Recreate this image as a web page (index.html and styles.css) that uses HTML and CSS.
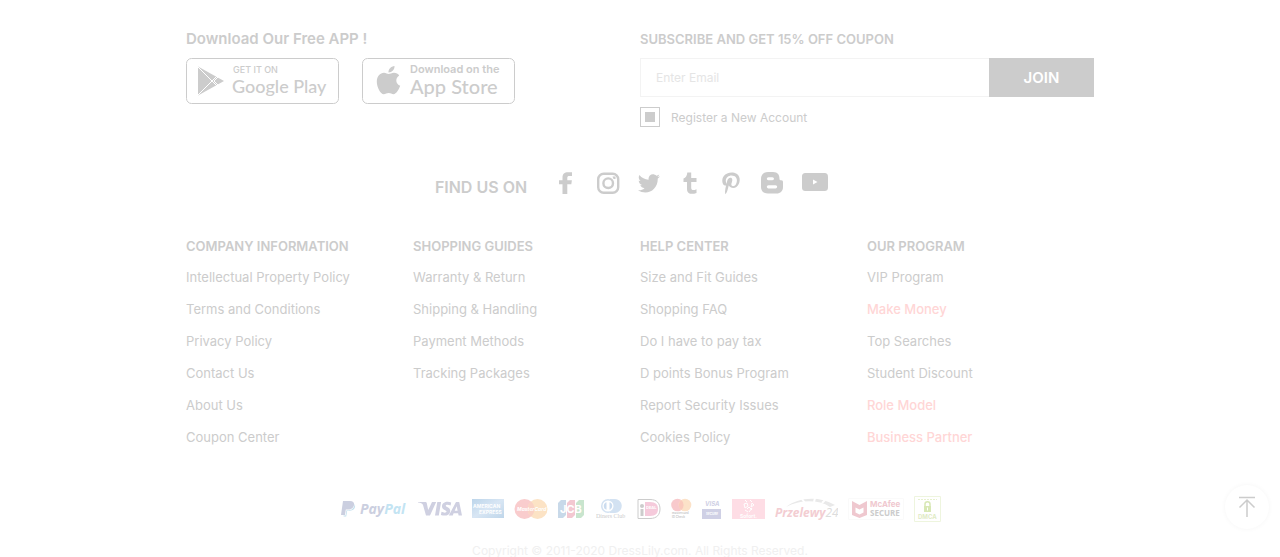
FILE: index.html
```html
<!DOCTYPE html>
<html lang="en">
<head>
<meta charset="utf-8">
<meta name="viewport" content="width=device-width, initial-scale=1">
<title>DressLily</title>
<link rel="stylesheet" href="styles.css">
</head>
<body>
<footer class="footer">
  <div class="top">
    <section class="apps">
      <h2 class="apps-title">Download Our Free APP !</h2>
      <div class="badges">
        <a class="badge" href="#" aria-label="Get it on Google Play">
          <svg width="153" height="46" viewBox="0 0 153 46">
            <rect x=".5" y=".5" width="152" height="45" rx="5" fill="none" stroke="#ccc"/>
            <path d="M12 8.500L38 23 12 37.500z" fill="#ccc"/>
            <path d="M12 9L32 29M12 37L32 17M33 18l-5 5 5 5" fill="none" stroke="#fff"/>
            <text class="google-small" x="47" y="15">GET IT ON</text>
            <text class="google-big" x="46" y="35">Google Play</text>
          </svg>
        </a>
        <a class="badge" href="#" aria-label="Download on the App Store">
          <svg width="153" height="46" viewBox="0 0 153 46">
            <rect x=".5" y=".5" width="152" height="45" rx="5" fill="none" stroke="#ccc"/>
            <path d="M32.500 8c.3 3.500-2.500 6.500-6 6.500C26.200 11.300 29 8.300 32.500 8zM26.500 16c1.600 0 3.200-1.300 5.500-1.300 2.200 0 4.100 1 5.200 2.800-4.300 2.700-3.700 8.500 1 10.300-1.200 3.500-4 8.400-6.700 8.400-1.800 0-2.700-1.100-4.800-1.100s-3.200 1.100-4.900 1.100c-3.300 0-7-7.200-7-12.500 0-5.500 3.300-9 7.200-9 2 0 3.400 1.300 4.500 1.300z" fill="#ccc"/>
            <text class="apple-small" x="48" y="15">Download on the</text>
            <text class="apple-big" x="48" y="36">App Store</text>
          </svg>
        </a>
      </div>
    </section>
    <form class="subscribe">
      <label class="section-title" for="email">SUBSCRIBE AND GET 15% OFF COUPON</label>
      <div class="email-row">
        <input class="email" id="email" type="email" placeholder="Enter Email">
        <button class="join" type="button">JOIN</button>
      </div>
      <div class="register">
        <input class="check" id="register" type="checkbox" checked>
        <label for="register">Register a New Account</label>
      </div>
    </form>
  </div>

  <section class="social">
    <h2 class="social-title">FIND US ON</h2>
    <div class="social-links">
      <a href="#" aria-label="Facebook"><svg width="24" height="24" viewBox="0 0 24 24"><path d="M7.500 23V13.200H4V9.300h3.500V6.500C7.500 3 9.500 1.300 13 1.300h4v3.800h-2.700c-1.400 0-2 .5-2 1.800v2.400h4.600l-.6 3.900h-4V23z"/></svg></a>
      <a href="#" aria-label="Instagram"><svg width="24" height="24" viewBox="0 0 24 24"><g fill="none" stroke="#ccc" stroke-width="2.400"><rect x="2.200" y="2.700" width="20" height="19" rx="5.500"/><circle cx="12.200" cy="12.200" r="4.800"/></g><path d="M16.500 5.500h3v2.500h-2z"/></svg></a>
      <a href="#" aria-label="Twitter"><svg width="24" height="24" viewBox="0 0 24 24"><path d="M23 5.200c-.8.500-1.700.7-2.600.9.900-.6 1.600-1.500 1.900-2.500-.9.500-1.800.9-2.900 1.100C16.200 1.400 10.800 3.600 11.600 8.800 7.900 8.600 4.600 6.900 2.400 4.100c-1.300 2.200-.5 4.700 1.300 6-.7 0-1.400-.2-2-.6 0 2.200 1.500 4 3.600 4.500-.7.200-1.300.2-2 .1.600 1.800 2.200 3 4.200 3.100C5.600 18.800 3.300 19.500 1 19.200c8.500 5.500 19.800.7 19.800-11.700.9-.6 1.600-1.400 2.200-2.300z"/></svg></a>
      <a href="#" aria-label="Tumblr"><svg width="24" height="24" viewBox="0 0 24 24"><path d="M9.300 1.500h3.900v5.600h5.300V11h-5.300v5.700c0 2.500 2 3 5.300 1.500v3.700c-5.100 2-9.500.9-9.500-4V11H5.500V7.500c2.300-.7 3.500-2.800 3.800-6z"/></svg></a>
      <a href="#" aria-label="Pinterest"><svg width="24" height="24" viewBox="0 0 24 24"><path d="M9.700 14.500C8.700 19 8 22 6.200 23.200c-.6-3.500.5-7.200 2-13.100.3-2.900 3.900-4.600 5-2 .7 1.800-1.300 4.600-.8 6 .6 1.700 3.300 1.200 4.400-.6 1.800-3 1.500-7.200-1.700-8.500C11.300 3.400 6.700 5.700 6.800 9.800c0 1.600.8 2.300.6 3.500-.2 1.300-.8 1.700-1.600 1.300-3-1.500-3.300-6.600-1-9.600C7.400 1.600 13.500.2 17.600 2.800c4.800 3 3.500 10.300.1 12.900-2.500 2-6.300 1.600-8-1.200z"/></svg></a>
      <a href="#" aria-label="Blogger"><svg width="24" height="24" viewBox="0 0 24 24"><path fill-rule="evenodd" d="M8 1h5c5 0 6.500 3 6.500 7 0 1 .5 1.300 1.700 1.300 1.500 0 1.800.7 1.800 2.200V16c0 4-2.500 6.500-6.500 6.500H8c-4.500 0-7-2.500-7-6.500V8c0-4 2.500-7 7-7zm.5 5.200c-2.200 0-2.200 3 0 3h3.800c2.200 0 2.200-3 0-3zm0 8c-2.200 0-2.200 3.200 0 3.200h7c2.200 0 2.200-3.200 0-3.200z"/></svg></a>
      <a href="#" aria-label="YouTube"><svg width="28" height="24" viewBox="0 0 28 24"><path fill-rule="evenodd" d="M5 2h18c3 0 4 1 4 4v10c0 3-1 4-4 4H5c-3 0-4-1-4-4V6c0-3 1-4 4-4zm7 6.500v5l4.500-2.500z"/></svg></a>
    </div>
  </section>

  <nav class="columns" aria-label="Footer">
    <section>
      <h2 class="section-title">COMPANY INFORMATION</h2>
      <ul class="links">
        <li><a href="#">Intellectual Property Policy</a></li>
        <li><a href="#">Terms and Conditions</a></li>
        <li><a href="#">Privacy Policy</a></li>
        <li><a href="#">Contact Us</a></li>
        <li><a href="#">About Us</a></li>
        <li><a href="#">Coupon Center</a></li>
      </ul>
    </section>
    <section>
      <h2 class="section-title">SHOPPING GUIDES</h2>
      <ul class="links">
        <li><a href="#">Warranty &amp; Return</a></li>
        <li><a href="#">Shipping &amp; Handling</a></li>
        <li><a href="#">Payment Methods</a></li>
        <li><a href="#">Tracking Packages</a></li>
      </ul>
    </section>
    <section>
      <h2 class="section-title">HELP CENTER</h2>
      <ul class="links">
        <li><a href="#">Size and Fit Guides</a></li>
        <li><a href="#">Shopping FAQ</a></li>
        <li><a href="#">Do I have to pay tax</a></li>
        <li><a href="#">D points Bonus Program</a></li>
        <li><a href="#">Report Security Issues</a></li>
        <li><a href="#">Cookies Policy</a></li>
      </ul>
    </section>
    <section>
      <h2 class="section-title">OUR PROGRAM</h2>
      <ul class="links">
        <li><a href="#">VIP Program</a></li>
        <li><a class="hot" href="#">Make Money</a></li>
        <li><a href="#">Top Searches</a></li>
        <li><a href="#">Student Discount</a></li>
        <li><a class="hot" href="#">Role Model</a></li>
        <li><a class="hot" href="#">Business Partner</a></li>
      </ul>
    </section>
  </nav>

  <div class="payments">
    <svg width="67" height="26" viewBox="0 0 67 26" role="img" aria-label="PayPal">
      <path d="M2 5h7c3.500 0 4.500 2 4 4.200-.6 3-3 4.300-6 4.300H4.800L4 19H0z" fill="#cbcfe0"/>
      <path d="M13.800 8c1.200 4-1.300 6.700-5.300 6.700H6.200L5.200 20.500H2.700l-.3-1h2.200l.9-5.300H7.500c3.500 0 5.700-2.200 6.300-6.200z" fill="#c3e0ee"/>
      <text class="paypal" x="19" y="18" fill="#cbcfe0">Pay<tspan fill="#c3e4f3">Pal</tspan></text>
    </svg>
    <svg width="44" height="26" viewBox="0 0 44 26" role="img" aria-label="Visa">
      <g fill="#cfd0e1"><path d="M0 6h7.200c1 0 1.400.5 1.600 1.300l1.400 6.800L14 6h4.200l-6.200 13.500H8L5 9C4.500 7.500 2.500 6.800 0 6.500zM19.300 6h3.800l-2.300 13.500H17zM33.200 6.500l-.6 3c-2.400-1.100-4.800-1-4.800.2 0 1.300 4.500 1.500 4.400 5.200-.1 4.500-5.200 5.600-9.300 4l.6-3.100c2.500 1.200 5 1.100 5-.3s-4.500-1.500-4.500-5.100c0-4.300 5-5.500 9.200-3.900z"/><path fill-rule="evenodd" d="M38 6h3.200L44 19.500h-3.400l-.5-2.200h-4.500l-.8 2.200h-4zm.7 4.200l-2 4.500h2.900z"/></g>
    </svg>
    <svg width="32" height="26" viewBox="0 0 32 26" role="img" aria-label="American Express">
      <defs><linearGradient id="amex" x1="0" x2="1" y1="0" y2="1"><stop stop-color="#bcd5ea"/><stop offset=".5" stop-color="#d8e6f4"/><stop offset="1" stop-color="#bfd6ea"/></linearGradient></defs>
      <path d="M0 3h32v19H0z" fill="url(#amex)"/><text class="tiny" x="1" y="12" fill="#fff">AMERICAN</text><text class="tiny" x="7" y="18" fill="#fff">EXPRESS</text>
    </svg>
    <svg width="34" height="26" viewBox="0 0 34 26" role="img" aria-label="MasterCard">
      <circle cx="10.500" cy="13" r="10" fill="#f9cccd"/><circle cx="23.500" cy="13" r="10" fill="#fce3c5"/><path d="M17 5.400a10 10 0 0 1 0 15.200 10 10 0 0 1 0-15.200z" fill="#fad2c5"/><text class="master" x="3" y="15" fill="#fff">MasterCard</text>
    </svg>
    <svg width="28" height="26" viewBox="0 0 28 26" role="img" aria-label="JCB">
      <path d="M3 4h5v15l-3 3H0V7z" fill="#c8d9e9"/><path d="M12 4h5v15l-3 3H9V7z" fill="#f3c8d1"/><path d="M21 4h5v15l-3 3h-5V7z" fill="#c9e5ce"/><text class="jcb" x="2" y="17" fill="#fff">JCB</text>
    </svg>
    <svg width="31" height="26" viewBox="0 0 31 26" role="img" aria-label="Diners Club">
      <path d="M14 3h5c9 1 9 13 0 14h-5z" fill="#d3e2f2"/><circle cx="12" cy="10" r="7" fill="#d3e2f2"/><circle cx="12" cy="10" r="5.500" fill="#fff"/><path d="M10.500 6.200v7.600a4 4 0 0 1 0-7.600zm3 0v7.600a4 4 0 0 0 0-7.600z" fill="#cbdcef"/><text class="diners" x="0" y="22" fill="#ccc">Diners Club</text>
    </svg>
    <svg width="24" height="26" viewBox="0 0 24 26" role="img" aria-label="iDEAL">
      <path d="M1 3.500h12c7 0 10 4 10 9.500s-3 9.500-10 9.500H1z" fill="#fff" stroke="#ccc"/><path d="M8 6h5c6 0 8 3 8 7s-2 7-8 7H8z" fill="#f5cadb"/><circle cx="5" cy="10" r="2" fill="#ccc"/><path d="M3.500 13h3v7h-3z" fill="#ccc"/><text class="ideal" x="9" y="13" fill="#fff">DEAL</text>
    </svg>
    <svg width="21" height="26" viewBox="0 0 21 26" role="img" aria-label="mastercard">
      <circle cx="6.500" cy="9" r="6.300" fill="#f8c9cc"/><circle cx="14" cy="9" r="6.300" fill="#fce2c8"/><path d="M10.200 4a6.300 6.300 0 0 1 0 10 6.300 6.300 0 0 1 0-10z" fill="#facabd"/><text class="micro" x="1" y="18" fill="#ccc">mastercard</text><text class="micro" x="1" y="22" fill="#ccc">ID Check</text>
    </svg>
    <svg width="20" height="26" viewBox="0 0 20 26" role="img" aria-label="Verified by Visa">
      <text class="visa-small" x="3" y="10" fill="#cfd0e5">VISA</text><path d="M0 13h19v10H0z" fill="#cfd0e5"/><text class="micro" x="4" y="19" fill="#fff">SECURE</text>
    </svg>
    <svg width="33" height="26" viewBox="0 0 33 26" role="img" aria-label="Sofort">
      <path d="M0 3h33v20H0z" fill="#fedde5"/><path d="M13 4l2 2m3-2l2 2M12 8l3-1 1 3-3 2zm8-1l2 2-3 2zm-5 6l2-2 3 3m-7 0l3 2m4-4l-3 4" fill="none" stroke="#fff"/><text class="tiny" x="8" y="22" fill="#fff">Sofort.</text>
    </svg>
    <svg width="63" height="26" viewBox="0 0 63 26" role="img" aria-label="Przelewy24">
      <path d="M11 11C22 2 43-1 60 9l-5 2C43 3 24 4 11 11z" fill="#e9e9e9"/><path d="M27 3l3 4m10-5l-1 4m11-2l-3 3" stroke="#fff" stroke-width="2"/><text class="przelewy" x="0" y="21" fill="#f3cdd2">Przelewy<tspan class="regular" fill="#ddd">24</tspan></text>
    </svg>
    <svg width="56" height="26" viewBox="0 0 56 26" role="img" aria-label="McAfee Secure">
      <path d="M.500 2.500h55v21H.5z" fill="#fff" stroke="#fafafa"/><path d="M4 5l7.500 4L19 5v14l-7.500 3L4 19z" fill="#efc8cf"/><path d="M7.500 11.500l4 2 4-2v5l-4 2-4-2z" fill="#fff"/><text class="mcafee" x="22" y="11" fill="#f0c8cf">McAfee</text><text class="secure" x="22" y="20" fill="#ccc">SECURE</text>
    </svg>
    <svg width="27" height="26" viewBox="0 0 27 26" role="img" aria-label="DMCA">
      <path d="M.500 .500h26v25H.5z" fill="#fff" stroke="#eef5de"/><path d="M4 3.500h19" stroke="#e7f1cf" stroke-dasharray="2 1"/><path d="M11 10V8c0-3 5-3 5 0v2" fill="none" stroke="#d8e8b5" stroke-width="1.500"/><path d="M10 10h7v6h-7z" fill="#d8e8b5"/><path d="M13 11.500h1v3h-1z" fill="#fff"/><text class="dmca" x="4" y="23" fill="#dfebc5">DMCA</text>
    </svg>
  </div>
  <p class="copyright">Copyright © 2011-2020 DressLily.com. All Rights Reserved.</p>
</footer>
<button class="to-top" type="button" aria-label="Back to top">
  <svg width="18" height="22" viewBox="0 0 18 22" fill="none" stroke="#ccc" stroke-width="1.500"><path d="M1 1.500h16M9 4v17M1.500 11.500L9 4l7.500 7.500"/></svg>
</button>
</body>
</html>
```
FILE: styles.css
```css
* { box-sizing: border-box; }

body {
  margin: 0;
  background: #fff;
  color: #ccc;
  font-family: Inter, "Liberation Sans", sans-serif;
  font-size: 13px;
}

h2, p, ul { margin: 0; padding: 0; }
a { color: inherit; text-decoration: none; }
svg { display: block; flex: none; }

.footer {
  width: 90%;
  max-width: 908px;
  margin: 0 auto;
  padding-top: 28px;
}

.top {
  display: grid;
  grid-template-columns: 1fr 1fr;
}

.section-title,
.apps-title {
  display: block;
  font-size: 13px;
  font-weight: 600;
  line-height: 22px;
}

.apps-title { font-size: 15px; }

.badges {
  display: flex;
  gap: 23px;
  margin-top: 8px;
}

.email-row {
  display: flex;
  margin-top: 8px;
}

.email {
  flex: 1;
  min-width: 0;
  height: 39px;
  padding: 0 15px;
  border: 1px solid #f3f3f3;
  border-right: 0;
  border-radius: 0;
  background: #fff;
  font: 12px Inter, sans-serif;
}

.email::placeholder { color: #e5e5e5; }

.join {
  width: 105px;
  border: 0;
  background: #ccc;
  color: #fff;
  font: 600 15px Inter, sans-serif;
}

.register {
  display: flex;
  align-items: center;
  gap: 11px;
  margin-top: 10px;
  font-size: 12px;
}

.check {
  appearance: none;
  width: 20px;
  height: 20px;
  margin: 0;
  padding: 4px;
  border: 1px solid #ccc;
  background: #fff;
}

.check:checked { background: #ccc content-box; }

.social {
  display: flex;
  justify-content: center;
  gap: 28px;
  margin-top: 44px;
  padding-right: 16px;
}

.social-title {
  padding-top: 6px;
  font-size: 16px;
  font-weight: 600;
  line-height: 20px;
}

.social-links {
  display: flex;
  gap: 17px;
  fill: #ccc;
}

.columns {
  display: grid;
  grid-template-columns: repeat(4, 1fr);
  margin-top: 38px;
}

.links {
  margin-top: 4px;
  list-style: none;
  line-height: 32px;
}

.hot {
  color: #ffd6d6;
  font-weight: 500;
}

.payments {
  display: flex;
  justify-content: center;
  gap: 10px;
  margin-top: 43px;
  padding-left: 2px;
}

.copyright {
  margin-top: 23px;
  color: #f0f0f0;
  font-size: 12px;
  line-height: 12px;
  text-align: center;
}

.to-top {
  position: fixed;
  right: 11px;
  bottom: 28px;
  display: grid;
  place-items: center;
  width: 44px;
  height: 44px;
  padding: 0;
  border: 0;
  border-radius: 50%;
  background: #fff;
  box-shadow: 0 0 5px #f5f5f5;
}

.badge text { fill: #ccc; }
.google-small { font: 500 9px Inter, sans-serif; }
.google-big { font: 500 18px Lato, sans-serif; }
.apple-small { font: 600 11px Inter, sans-serif; }
.apple-big { font: 500 20px Lato, sans-serif; }
.paypal { font: italic 700 14px "Open Sans", sans-serif; }
.tiny { font: 700 5px Inter, sans-serif; }
.master { font: italic 700 5px Inter, sans-serif; }
.jcb { font: 700 11px Inter, sans-serif; }
.diners { font: 6px "Liberation Serif", serif; }
.ideal { font: 700 4px Inter, sans-serif; }
.micro { font: 700 3px Inter, sans-serif; }
.visa-small { font: italic 700 6px Inter, sans-serif; }
.przelewy { font: italic 700 12px "Open Sans", sans-serif; }
.regular { font-weight: 400; }
.mcafee { font: 700 8px Inter, sans-serif; }
.secure { font: 700 8px "Open Sans", sans-serif; }
.dmca { font: 700 6px Inter, sans-serif; }
```
